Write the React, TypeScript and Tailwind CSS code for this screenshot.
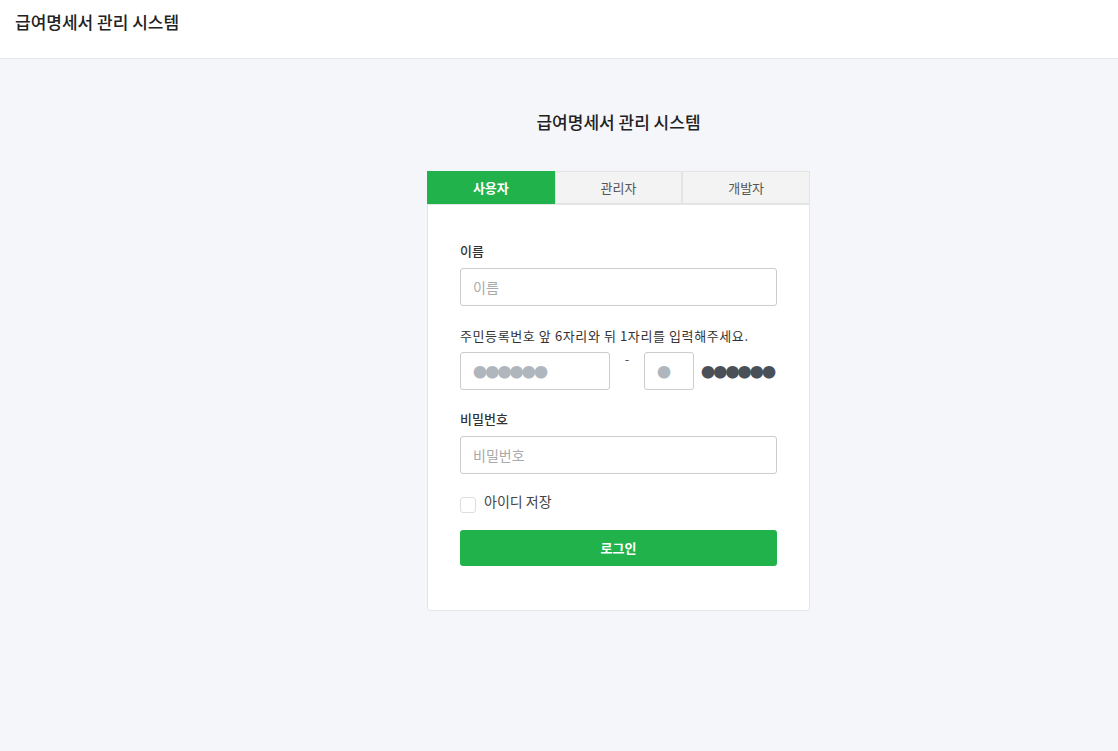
import { useState } from "react";

const font = { fontFamily: '"Noto Sans CJK KR", "Noto Sans", sans-serif' };

export default function App() {
  const [tab, setTab] = useState("사용자");
  const tabs = ["사용자", "관리자", "개발자"];

  return (
    <main className="min-h-screen flex flex-col bg-[#f5f6fa] text-[#333]" style={font}>
      <header className="h-[59px] bg-white border-b border-[#e3e6ec] flex items-center px-[15px]">
        <h1 className="text-[17px] font-medium text-[#222] -mt-[14px]">급여명세서 관리 시스템</h1>
      </header>

      <section className="flex flex-col items-center pl-[119px] pt-[48px]">
        <h2 className="text-[17px] font-medium text-[#222] leading-[30px]">급여명세서 관리 시스템</h2>

        <div className="w-[383px] mt-[34px]">
          <div className="grid grid-cols-3 h-[33px]">
            {tabs.map((t) => (
              <button
                key={t}
                onClick={() => setTab(t)}
                className={
                  t === tab
                    ? "bg-[#22b24c] text-white text-[13px] font-bold"
                    : "bg-[#f3f3f3] border border-[#e3e3e3] text-[#555] text-[13px]"
                }
              >
                {t}
              </button>
            ))}
          </div>

          <div className="bg-white border border-[#e3e5ea] rounded-b-[3px] px-[32px] pt-[36px] pb-[44px] flex flex-col">
            <label className="text-[13px] font-medium text-[#333] leading-[20px]">이름</label>
            <input
              placeholder="이름"
              className="mt-[7px] h-[38px] border border-[#ccc] rounded-[3px] px-[12px] text-[14px] placeholder-[#aaa] outline-none"
            />

            <label className="mt-[20px] text-[13px] text-[#333] leading-[20px] tracking-[0.6px]">
              주민등록번호 앞 6자리와 뒤 1자리를 입력해주세요.
            </label>
            <div className="mt-[6px] flex items-start">
              <div className="w-[150px] h-[38px] border border-[#ccc] rounded-[3px] px-[12px] flex items-center text-[14px] text-[#b0b6bd] tracking-[-1.8px]">
                ●●●●●●
              </div>
              <span className="w-[34px] text-center text-[13px] text-[#555] leading-[14px]">-</span>
              <div className="w-[50px] h-[38px] border border-[#ccc] rounded-[3px] px-[12px] flex items-center text-[14px] text-[#b0b6bd]">
                ●
              </div>
              <span className="ml-[7px] h-[38px] flex items-center text-[14px] text-[#4a5058] tracking-[-1.8px]">
                ●●●●●●
              </span>
            </div>

            <label className="mt-[19px] text-[13px] font-medium text-[#333] leading-[20px]">비밀번호</label>
            <input
              type="password"
              placeholder="비밀번호"
              className="mt-[7px] h-[38px] border border-[#ccc] rounded-[3px] px-[12px] text-[14px] placeholder-[#aaa] outline-none"
            />

            <label className="mt-[17px] flex items-start gap-[8px] text-[14px] text-[#444]">
              <span className="mt-[6px] w-[16px] h-[16px] border border-[#ddd] rounded-[3px] bg-white" />
              <span className="leading-[20px]">아이디 저장</span>
            </label>

            <button className="mt-[17px] h-[36px] bg-[#22b24c] rounded-[3px] text-white text-[13px] font-bold">
              로그인
            </button>
          </div>
        </div>
      </section>
    </main>
  );
}
